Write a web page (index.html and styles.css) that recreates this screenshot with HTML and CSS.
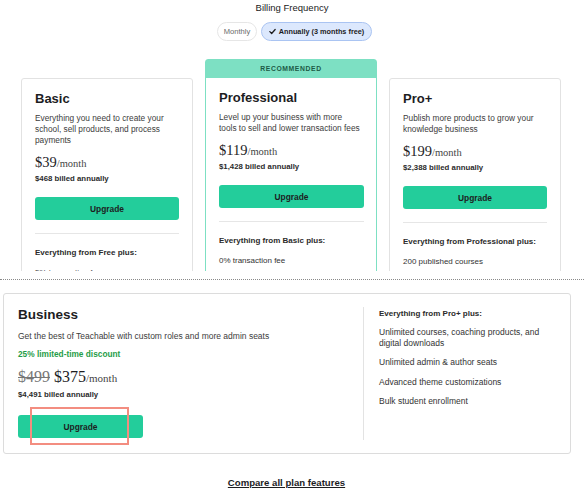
FILE: index.html
```html
<!DOCTYPE html>
<html lang="en">
<head>
<meta charset="utf-8">
<title>Plans</title>
<link rel="stylesheet" href="styles.css">
</head>
<body>
<div class="page">
  <div class="billing">
    <div class="billing-title">Billing Frequency</div>
    <div class="toggle">
      <span class="pill pill-off">Monthly</span>
      <span class="pill pill-on"><svg class="check" viewBox="0 0 10 10" width="7" height="7"><polyline points="1.2,5.2 3.8,7.8 8.8,2.2" fill="none" stroke="#1d1d1f" stroke-width="1.8" stroke-linecap="round" stroke-linejoin="round"/></svg>Annually (3 months free)</span>
    </div>
  </div>

  <div class="plans-viewport">
    <div class="plans">
      <div class="card">
        <div class="card-body">
          <h2 class="plan-name">Basic</h2>
          <p class="plan-desc">Everything you need to create your school, sell products, and process payments</p>
          <div class="price"><span class="amount">$39</span><span class="per">/month</span></div>
          <div class="billed">$468 billed annually</div>
          <button class="btn">Upgrade</button>
          <hr class="divider">
          <div class="feat-head">Everything from Free plus:</div>
          <div class="feat">5% transaction fee</div>
          <div class="feat">Unlimited students</div>
        </div>
      </div>

      <div class="card card-rec">
        <div class="rec-head">RECOMMENDED</div>
        <div class="card-body">
          <h2 class="plan-name">Professional</h2>
          <p class="plan-desc">Level up your business with more tools to sell and lower transaction fees</p>
          <div class="price"><span class="amount">$119</span><span class="per">/month</span></div>
          <div class="billed">$1,428 billed annually</div>
          <button class="btn">Upgrade</button>
          <hr class="divider">
          <div class="feat-head">Everything from Basic plus:</div>
          <div class="feat">0% transaction fee</div>
          <div class="feat">5 published courses</div>
        </div>
      </div>

      <div class="card">
        <div class="card-body">
          <h2 class="plan-name">Pro+</h2>
          <p class="plan-desc">Publish more products to grow your knowledge business</p>
          <div class="price"><span class="amount">$199</span><span class="per">/month</span></div>
          <div class="billed">$2,388 billed annually</div>
          <button class="btn">Upgrade</button>
          <hr class="divider">
          <div class="feat-head">Everything from Professional plus:</div>
          <div class="feat">200 published courses</div>
          <div class="feat">Certificates</div>
        </div>
      </div>
    </div>
  </div>

  <div class="dotted"></div>

  <div class="business">
    <div class="biz-left">
      <h2 class="biz-name">Business</h2>
      <p class="biz-desc">Get the best of Teachable with custom roles and more admin seats</p>
      <div class="discount">25% limited-time discount</div>
      <div class="price biz-price"><span class="old">$499</span> <span class="amount">$375</span><span class="per">/month</span></div>
      <div class="billed">$4,491 billed annually</div>
      <div class="biz-btn-wrap">
        <button class="btn biz-btn">Upgrade</button>
        <span class="highlight"></span>
      </div>
    </div>
    <div class="biz-right">
      <div class="feat-head">Everything from Pro+ plus:</div>
      <div class="feat">Unlimited courses, coaching products, and digital downloads</div>
      <div class="feat">Unlimited admin &amp; author seats</div>
      <div class="feat">Advanced theme customizations</div>
      <div class="feat">Bulk student enrollment</div>
    </div>
  </div>

  <div class="compare"><a href="#">Compare all plan features</a></div>
</div>
</body>
</html>
```

FILE: styles.css
```css
* { box-sizing: border-box; }
html, body { margin: 0; padding: 0; background: #fff; }
body {
  font-family: "Liberation Sans", Arial, sans-serif;
  color: #1d1d1f;
  width: 584px;
  height: 494px;
  overflow: hidden;
}
.page { width: 584px; }

.billing { text-align: center; padding-top: 2px; }
.billing-title { font-size: 9.5px; line-height: 12px; color: #222; }
.toggle {
  display: flex;
  justify-content: center;
  gap: 4px;
  margin-top: 8px;
  padding-left: 5px;
}
.pill {
  display: inline-flex;
  align-items: center;
  justify-content: center;
  height: 19px;
  border-radius: 10px;
  font-size: 7.6px;
  padding: 0;
  white-space: nowrap;
}
.pill-off { border: 1px solid #e6e6e6; color: #6b6b6b; width: 40px; }
.pill-on {
  border: 1px solid #aac4f2;
  background: #dce8fd;
  font-weight: bold;
  font-size: 7.3px;
  width: 111px;
  gap: 3px;
}
.check { display: block; flex: none; }

.plans-viewport {
  height: 230px;
  overflow: hidden;
}
.plans {
  display: grid;
  grid-template-columns: repeat(3, 172px);
  gap: 12px;
  justify-content: center;
  padding-top: 18px;
  padding-right: 2px;
}
.card {
  margin-top: 19px;
  border: 1px solid #e2e2e2;
  border-radius: 3px;
  height: 400px;
  background: #fff;
}
.card-rec {
  margin-top: 0;
  border: 1.5px solid #7de0c3;
  border-radius: 3px 3px 0 0;
}
.rec-head {
  height: 18px;
  background: #7de0c3;
  color: #1c5a46;
  font-size: 6.8px;
  font-weight: bold;
  letter-spacing: 0.6px;
  text-align: center;
  line-height: 18px;
}
.card-body { padding: 11px 13px 0 13px; }
.card-rec .card-body { padding-left: 13px; padding-right: 12px; }

.plan-name {
  margin: 0;
  font-size: 13px;
  line-height: 17px;
  font-weight: bold;
  color: #1d1d1f;
}
.plan-desc {
  margin: 6px 0 0 0;
  font-size: 8.3px;
  line-height: 11px;
  color: #3c3c3c;
}
.card-rec .plan-desc { margin-right: 3px; }
.price {
  margin-top: 7px;
  font-family: "Liberation Serif", "Times New Roman", serif;
  line-height: 18px;
  color: #1d1d1f;
}
.amount { font-size: 14.5px; }
.per { font-size: 10.5px; color: #444; }
.billed {
  font-size: 7.8px;
  line-height: 11px;
  font-weight: bold;
  color: #2b2b2b;
}
.btn {
  display: block;
  width: 100%;
  height: 23px;
  margin-top: 13px;
  border: 0;
  border-radius: 3px;
  background: #23cd9b;
  color: #1d1d1f;
  font-family: "Liberation Sans", Arial, sans-serif;
  font-size: 8.4px;
  font-weight: bold;
  padding: 0;
}
.divider {
  margin: 13px 0 0 0;
  border: 0;
  border-top: 1.5px solid #e6e6e6;
}
.feat-head {
  margin-top: 13px;
  font-size: 8px;
  line-height: 11px;
  font-weight: bold;
  color: #2b2b2b;
}
.feat {
  margin-top: 9px;
  font-size: 8px;
  line-height: 11px;
  color: #333;
}

.dotted {
  margin-top: 8px;
  border-top: 1px dotted #8a8a8a;
  height: 0;
}

.business {
  position: relative;
  margin: 13px 13px 0 3px;
  border: 1px solid #dcdcdc;
  border-radius: 3px;
  height: 161px;
  display: grid;
  grid-template-columns: 359px 1fr;
}
.biz-left { padding: 12px 0 0 14px; }
.biz-name {
  margin: 0;
  font-size: 13.5px;
  line-height: 18px;
  font-weight: bold;
}
.biz-desc {
  margin: 7px 0 0 0;
  font-size: 8.5px;
  line-height: 11px;
  color: #3c3c3c;
}
.discount {
  margin-top: 7px;
  font-size: 8.3px;
  line-height: 11px;
  font-weight: bold;
  color: #1f9d48;
}
.biz-price { margin-top: 7px; line-height: 20px; }
.biz-price .amount, .biz-price .old { font-size: 16px; }
.biz-price .per { font-size: 11px; }
.old { color: #777; text-decoration: line-through; text-decoration-thickness: 1px; }
.biz-price + .billed { margin-top: 1px; }
.biz-btn-wrap { position: relative; width: 125px; margin-top: 15px; }
.biz-btn { margin-top: 0; }
.highlight {
  position: absolute;
  left: 12px;
  top: -8px;
  width: 99px;
  height: 38px;
  border: 2.5px solid #f38d80;
}

.biz-right {
  margin: 13px 0 13px 0;
  border-left: 1.5px solid #e3e3e3;
  padding: 1px 16px 0 15px;
}
.biz-right .feat-head { margin-top: 0; font-size: 8px; }
.biz-right .feat { font-size: 8.5px; line-height: 10.5px; margin-top: 9px; }
.biz-right .feat-head + .feat { margin-top: 8px; }

.compare {
  margin-top: 18px;
  text-align: center;
  padding-right: 11px;
}
.compare a {
  font-size: 9.6px;
  font-weight: bold;
  color: #1d1d1f;
  text-decoration: underline;
}
```
